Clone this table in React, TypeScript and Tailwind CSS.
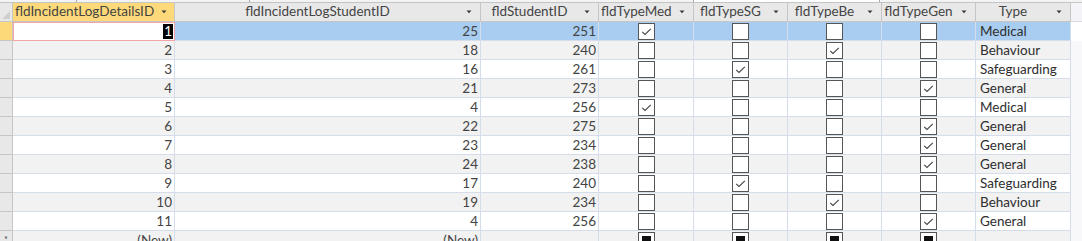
import React from "react";

type Row = { id: number; sid: number; stu: number; med: boolean; sg: boolean; be: boolean; gen: boolean; type: string };

const rows: Row[] = [
  { id: 1, sid: 25, stu: 251, med: true, sg: false, be: false, gen: false, type: "Medical" },
  { id: 2, sid: 18, stu: 240, med: false, sg: false, be: true, gen: false, type: "Behaviour" },
  { id: 3, sid: 16, stu: 261, med: false, sg: true, be: false, gen: false, type: "Safeguarding" },
  { id: 4, sid: 21, stu: 273, med: false, sg: false, be: false, gen: true, type: "General" },
  { id: 5, sid: 4, stu: 256, med: true, sg: false, be: false, gen: false, type: "Medical" },
  { id: 6, sid: 22, stu: 275, med: false, sg: false, be: false, gen: true, type: "General" },
  { id: 7, sid: 23, stu: 234, med: false, sg: false, be: false, gen: true, type: "General" },
  { id: 8, sid: 24, stu: 238, med: false, sg: false, be: false, gen: true, type: "General" },
  { id: 9, sid: 17, stu: 240, med: false, sg: true, be: false, gen: false, type: "Safeguarding" },
  { id: 10, sid: 19, stu: 234, med: false, sg: false, be: true, gen: false, type: "Behaviour" },
  { id: 11, sid: 4, stu: 256, med: false, sg: false, be: false, gen: true, type: "General" },
];

const GRID =
  "grid grid-cols-[13px_162px_306px_118px_95px_94px_94px_94px_95px_1fr]";

function Arrow() {
  return (
    <svg width="6" height="4" viewBox="0 0 6 4" className="block">
      <path d="M0.5 0.5 L5.5 0.5 L3 3.2 Z" fill="#3a3a3a" />
    </svg>
  );
}

function Header({ label, yellow }: { label: string; yellow?: boolean }) {
  return (
    <div
      className={`flex h-[19px] items-center border-r border-b border-[#c6c6c6] ${
        yellow ? "bg-[#fdd97a]" : "bg-[#e8e8e8]"
      }`}
    >
      <div className="flex-1 text-center leading-none pl-[2px]">{label}</div>
      <div className="flex w-[22px] items-center justify-center">
        <Arrow />
      </div>
    </div>
  );
}

function Check({ on, nul }: { on?: boolean; nul?: boolean }) {
  return (
    <div className="flex h-full items-center justify-center">
      <div className="relative h-[17px] w-[17px] border border-[#555] bg-white">
        {on && (
          <svg width="15" height="15" viewBox="0 0 15 15" className="absolute left-0 top-0">
            <path d="M3.2 7.8 L6 10.5 L11.8 4.8" fill="none" stroke="#444" strokeWidth="1.1" />
          </svg>
        )}
        {nul && <div className="absolute left-[3px] top-[3px] h-[9px] w-[9px] bg-[#111]" />}
      </div>
    </div>
  );
}

export default function App() {
  return (
    <div
      className="h-[241px] w-[1082px] overflow-hidden bg-white text-[13.5px] text-[#444]"
      style={{ fontFamily: 'Lato, "Liberation Sans", Arial, sans-serif' }}
    >
      {/* top strip */}
      <div className="flex h-[3px] border-b border-[#c4c4c4] bg-[#f3f3f3]">
        <div className="w-[77px] border-r border-[#a8a8a8]" />
        <div className="w-[173px] border-r border-[#a8a8a8]" />
        <div className="w-[443px]" />
        <div className="w-[187px] border-x border-[#a8a8a8] bg-white" />
        <div className="flex-1" />
      </div>

      {/* header */}
      <div className={GRID}>
        <div className="relative h-[19px] border-r border-b border-[#c6c6c6] bg-[#e8e8e8]">
          <svg width="8" height="8" viewBox="0 0 8 8" className="absolute bottom-[2px] right-[2px]">
            <path d="M8 0 L8 8 L0 8 Z" fill="#cfcfcf" />
          </svg>
        </div>
        <Header label="fldIncidentLogDetailsID" yellow />
        <Header label="fldIncidentLogStudentID" />
        <Header label="fldStudentID" />
        <Header label="fldTypeMed" />
        <Header label="fldTypeSG" />
        <Header label="fldTypeBe" />
        <Header label="fldTypeGen" />
        <Header label="Type" />
        <div className="h-[19px] border-b border-[#dcdce6] bg-[#f3f3f8]" />
      </div>

      {rows.map((r, i) => {
        const sel = i === 0;
        const bg = sel ? "bg-[#a8cdf1]" : i % 2 === 1 ? "bg-[#f2f2f2]" : "bg-white";
        const line = "border-r border-b border-[#d5dcea]";
        return (
          <div key={r.id} className={GRID}>
            <div
              className={`h-[19px] border-r border-b border-[#c6c6c6] ${
                sel ? "bg-[#fdd97a]" : "bg-[#e8e8e8]"
              }`}
            />
            {sel ? (
              <div className="flex h-[19px] items-center justify-end border border-[#f3a5a5] bg-white pr-[1px]">
                <span className="bg-black px-[1px] leading-[15px] text-white">1</span>
              </div>
            ) : (
              <div className={`flex h-[19px] items-center justify-end pr-[2px] pt-[1px] ${line} ${bg}`}>{r.id}</div>
            )}
            <div className={`flex h-[19px] items-center justify-end pr-[2px] pt-[1px] ${line} ${bg}`}>{r.sid}</div>
            <div className={`flex h-[19px] items-center justify-end pr-[2px] pt-[1px] ${line} ${bg}`}>{r.stu}</div>
            <div className={`h-[19px] ${line} ${bg}`}>
              <Check on={r.med} />
            </div>
            <div className={`h-[19px] ${line} ${bg}`}>
              <Check on={r.sg} />
            </div>
            <div className={`h-[19px] ${line} ${bg}`}>
              <Check on={r.be} />
            </div>
            <div className={`h-[19px] ${line} ${bg}`}>
              <Check on={r.gen} />
            </div>
            <div className={`flex h-[19px] items-center pl-[4px] pt-[1px] text-[#2e2e2e] ${line} ${bg}`}>{r.type}</div>
            <div className={`h-[19px] ${sel ? "bg-white" : "bg-[#f8f8fb]"}`} />
          </div>
        );
      })}

      {/* new record row */}
      <div className={GRID}>
        <div className="flex h-[19px] items-center justify-center border-r border-b border-[#c6c6c6] bg-[#e8e8e8] text-[9px]">
          *
        </div>
        <div className="flex h-[19px] items-center justify-end border-r border-b border-[#d5dcea] bg-[#f2f2f2] pr-[2px]">
          (New)
        </div>
        <div className="flex h-[19px] items-center justify-end border-r border-b border-[#d5dcea] bg-[#f2f2f2] pr-[2px]">
          (New)
        </div>
        <div className="h-[19px] border-r border-b border-[#d5dcea] bg-[#f2f2f2]" />
        <div className="h-[19px] border-r border-b border-[#d5dcea] bg-[#f2f2f2]">
          <Check nul />
        </div>
        <div className="h-[19px] border-r border-b border-[#d5dcea] bg-[#f2f2f2]">
          <Check nul />
        </div>
        <div className="h-[19px] border-r border-b border-[#d5dcea] bg-[#f2f2f2]">
          <Check nul />
        </div>
        <div className="h-[19px] border-r border-b border-[#d5dcea] bg-[#f2f2f2]">
          <Check nul />
        </div>
        <div className="h-[19px] border-r border-b border-[#d5dcea] bg-[#f2f2f2]" />
        <div className="h-[19px] bg-[#f8f8fb]" />
      </div>
    </div>
  );
}
